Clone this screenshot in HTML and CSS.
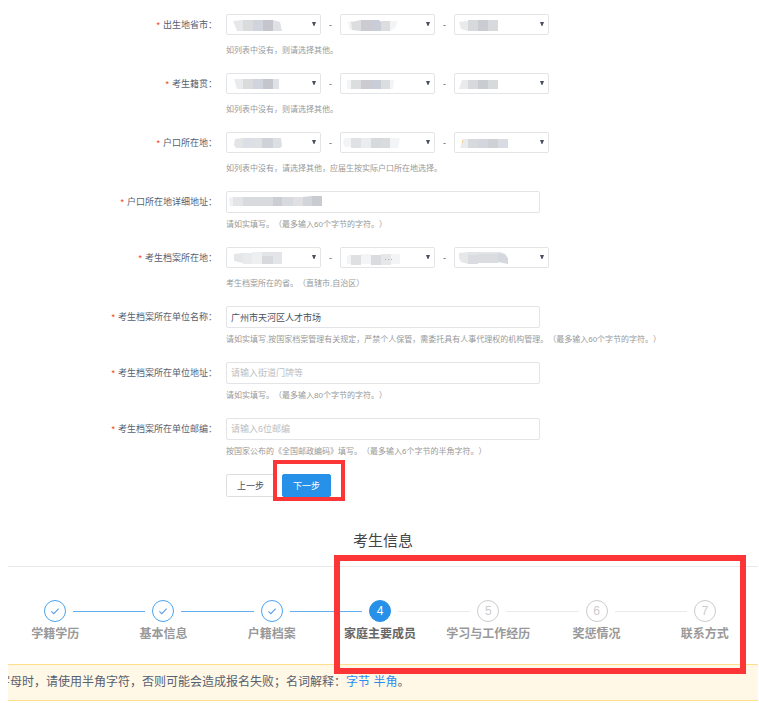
FILE: index.html
```html
<!DOCTYPE html>
<html lang="zh-CN">
<head>
<meta charset="utf-8">
<title>考生信息</title>
<link rel="stylesheet" href="styles.css">
</head>
<body>
<form class="form">
  <div class="row">
    <label class="label" for="birth"><span class="star">*</span>出生地省市：</label>
    <div class="content">
      <div class="selects">
        <div class="pick"><select id="birth"></select><svg class="mask" viewBox="0 0 95 21"><path fill="#e6e7e8" d="M7 7l10-1v11H11z"/><path fill="#dadbdd" d="M17 6h10v11H17z"/><path fill="#d0d4dc" d="M27 6h10v11H27z"/><path fill="#c4c5cd" d="M37 6h10v11H37z"/><path fill="#dfe1e4" d="M47 6l7 2 2 9h-9z"/></svg></div>
        <span class="dash">-</span>
        <div class="pick"><select aria-label="出生地市"></select><svg class="mask" viewBox="0 0 95 21"><path fill="#f3f4f5" d="M8 8l4-1v9l-3-1zM50 7h8l-3 7-5 3z"/><path fill="#dcdddf" d="M11 8l10-2v11l-9-1zM41 7h9v10h-9z"/><path fill="#cccbd1" d="M21 6h11v11H21z"/><path fill="#c8cdd8" d="M32 6h7l2 2v9h-9z"/></svg></div>
        <span class="dash">-</span>
        <div class="pick"><select aria-label="出生地区县"></select><svg class="mask" viewBox="0 0 95 21"><path fill="#e9eaeb" d="M5 8l9-1v10l-7-2z"/><path fill="#d7dadd" d="M14 6h10v11H14zM34 6h10v11H34z"/><path fill="#c9ccd1" d="M24 6h10v11H24z"/></svg></div>
      </div>
      <p class="hint">如列表中没有，则请选择其他。</p>
    </div>
  </div>
  <div class="row">
    <label class="label" for="origin"><span class="star">*</span>考生籍贯：</label>
    <div class="content">
      <div class="selects">
        <div class="pick"><select id="origin"></select><svg class="mask" viewBox="0 0 95 21"><path fill="#eaebec" d="M8 6h9v10h-6z"/><path fill="#dadbdd" d="M17 6h10v10H17z"/><path fill="#d0d4dc" d="M27 6h10v10H27z"/><path fill="#c4c5cd" d="M37 6h10v10H37z"/><path fill="#dfe1e4" d="M47 6h6v10h-6z"/></svg></div>
        <span class="dash">-</span>
        <div class="pick"><select aria-label="籍贯市"></select><svg class="mask" viewBox="0 0 95 21"><path fill="#f3f4f5" d="M7 7h4v9H7zM50 7h4l-1 9h-3z"/><path fill="#dcdddf" d="M11 7h10v9H11zM41 7h9v9h-9z"/><path fill="#cccbd1" d="M21 7h11v9H21z"/><path fill="#c8cdd8" d="M32 7h9v9h-9z"/></svg></div>
        <span class="dash">-</span>
        <div class="pick"><select aria-label="籍贯区县"></select><svg class="mask" viewBox="0 0 95 21"><path fill="#e9eaeb" d="M8 7h6v9H5z"/><path fill="#d7dadd" d="M14 7h10v9H14zM34 7h10v9H34z"/><path fill="#c9ccd1" d="M24 7h10v9H24z"/></svg></div>
      </div>
      <p class="hint">如列表中没有，则请选择其他。</p>
    </div>
  </div>
  <div class="row">
    <label class="label" for="household"><span class="star">*</span>户口所在地：</label>
    <div class="content">
      <div class="selects">
        <div class="pick"><select id="household"></select><svg class="mask" viewBox="0 0 95 21"><path fill="#e3e4e6" d="M9 7l8-1v10H10l-2-3z"/><path fill="#dcdfe5" d="M17 6h10v10H17z"/><path fill="#dfe0e3" d="M27 6h9v10h-9z"/><path fill="#cfd2d8" d="M36 6h11v10H36z"/><path fill="#dde0e3" d="M47 6h8l1 8-2 2h-7z"/></svg></div>
        <span class="dash">-</span>
        <div class="pick"><select aria-label="户口所在市"></select><svg class="mask" viewBox="0 0 95 21"><path fill="#f3f4f5" d="M4 6h7v9H5l-2-3zM50 6h10l-2 10h-8z"/><path fill="#e0e1e4" d="M11 6h10v10H11z"/><path fill="#eaecef" d="M21 6h10v10H21z"/><path fill="#d6dadc" d="M31 6h10v10H31z"/><path fill="#dadbde" d="M41 6h9v10h-9z"/></svg></div>
        <span class="dash">-</span>
        <div class="pick"><select aria-label="户口所在区县"></select><svg class="mask" viewBox="0 0 95 21"><path fill="#eaebec" d="M9 7h5v9H6z"/><path fill="#d7dadd" d="M14 7h10v9H14z"/><path fill="#d3d6dc" d="M24 7h10v9H24z"/><path fill="#d0d1d4" d="M34 7h10v9H34z"/><path fill="#d8dbe1" d="M44 7h10v9H44z"/><path fill="#f3cf95" d="M8 8h1v3H8z"/></svg></div>
      </div>
      <p class="hint">如列表中没有，请选择其他，应届生按实际户口所在地选择。</p>
    </div>
  </div>
  <div class="row">
    <label class="label" for="address"><span class="star">*</span>户口所在地详细地址：</label>
    <div class="content">
      <div class="entry"><input id="address" type="text"><svg class="mask mask-wide" viewBox="0 0 100 22"><path fill="#eff0f1" d="M3 7l4-1v9H4z"/><path fill="#e3e4e7" d="M7 6h10v9H7z"/><path fill="#d8dadd" d="M17 6h30v9H17z"/><path fill="#cdced3" d="M47 6h9v9h-9z"/><path fill="#d7dbdf" d="M56 6h11v9H56z"/><path fill="#e0dfe2" d="M67 6h10v9H67z"/><path fill="#d2d6da" d="M77 6l9-1v10h-9z"/><path fill="#c9cbd1" d="M86 5h10v10H86z"/></svg></div>
      <p class="hint">请如实填写。（最多输入60个字节的字符。）</p>
    </div>
  </div>
  <div class="row">
    <label class="label" for="archive"><span class="star">*</span>考生档案所在地：</label>
    <div class="content">
      <div class="selects">
        <div class="pick"><select id="archive"></select><svg class="mask" viewBox="0 0 95 21"><path fill="#e5e6e7" d="M8 7l9-1v10l-9-2z"/><path fill="#e9eaec" d="M17 6h9v11h-9z"/><path fill="#eeeff0" d="M26 5h10v12H26z"/><path fill="#d8d9dd" d="M36 9h11v8H36z"/><path fill="#e3e5e8" d="M36 5h20v12h-9V9H36z"/></svg></div>
        <span class="dash">-</span>
        <div class="pick"><select aria-label="档案所在市"></select><svg class="mask" viewBox="0 0 95 21"><path fill="#f3f4f5" d="M7 9l4-2v10H7zM21 7h10v10H21zM51 7h9v10h-9z"/><path fill="#dfe0e2" d="M11 8h10v10H11z"/><path fill="#d9dcdf" d="M31 8h10v10H31z"/><path fill="#e5e7e9" d="M41 7h10v11H41z"/><path fill="#aaadb2" d="M45 12h1v1h-1zM48 12h1v1h-1zM51 12h1v1h-1z"/></svg></div>
        <span class="dash">-</span>
        <div class="pick"><select aria-label="档案所在区县"></select><svg class="mask" viewBox="0 0 95 21"><path fill="#e5e7e8" d="M5 6l9-1v12l-7-2-2-4z"/><path fill="#d9dce0" d="M14 8h10v9H14z"/><path fill="#e2e4e5" d="M14 5h32l5 2H24v9h20v-2H24V8H14z"/><path fill="#dadddf" d="M24 7h20v9H24z"/><path fill="#d5d8de" d="M44 6l7 1 3 4v6l-10-2z"/></svg></div>
      </div>
      <p class="hint">考生档案所在的省。（直辖市,自治区）</p>
    </div>
  </div>
  <div class="row">
    <label class="label" for="unit"><span class="star">*</span>考生档案所在单位名称：</label>
    <div class="content">
      <div class="entry"><input id="unit" type="text" value="广州市天河区人才市场"></div>
      <p class="hint">请如实填写,按国家档案管理有关规定，严禁个人保管，需委托具有人事代理权的机构管理。（最多输入60个字节的字符。）</p>
    </div>
  </div>
  <div class="row">
    <label class="label" for="unit-address"><span class="star">*</span>考生档案所在单位地址：</label>
    <div class="content">
      <div class="entry"><input id="unit-address" type="text" placeholder="请输入街道门牌等"></div>
      <p class="hint">请如实填写。（最多输入80个字节的字符。）</p>
    </div>
  </div>
  <div class="row">
    <label class="label" for="postcode"><span class="star">*</span>考生档案所在单位邮编：</label>
    <div class="content">
      <div class="entry"><input id="postcode" type="text" placeholder="请输入6位邮编"></div>
      <p class="hint">按国家公布的《全国邮政编码》填写。（最多输入6个字节的半角字符。）</p>
    </div>
  </div>
  <div class="actions">
    <button class="btn" type="button">上一步</button>
    <div class="next"><button class="btn btn-primary" type="button">下一步</button><span class="frame frame-next"></span></div>
  </div>
</form>

<section>
  <h1 class="title">考生信息</h1>
  <div class="progress">
    <ol class="steps">
      <li class="step done"><div class="track"><span class="dot"><svg viewBox="0 0 22 22"><path d="M7 11.5l2.7 2.5 5.3-5.5"/></svg></span></div>学籍学历</li>
      <li class="step done"><div class="track"><span class="dot"><svg viewBox="0 0 22 22"><path d="M7 11.5l2.7 2.5 5.3-5.5"/></svg></span></div>基本信息</li>
      <li class="step done"><div class="track"><span class="dot"><svg viewBox="0 0 22 22"><path d="M7 11.5l2.7 2.5 5.3-5.5"/></svg></span></div>户籍档案</li>
      <li class="step current"><div class="track"><span class="dot">4</span></div>家庭主要成员</li>
      <li class="step"><div class="track"><span class="dot">5</span></div>学习与工作经历</li>
      <li class="step"><div class="track"><span class="dot">6</span></div>奖惩情况</li>
      <li class="step"><div class="track"><span class="dot">7</span></div>联系方式</li>
    </ol>
    <span class="frame frame-steps"></span>
  </div>
  <div class="notice"><p>字母时，请使用半角字符，否则可能会造成报名失败；名词解释：<a href="#byte">字节</a> <a href="#half">半角</a>。</p></div>
</section>
</body>
</html>
```
FILE: styles.css
```css
* {
  box-sizing: border-box;
}

body {
  margin: 0;
  background: #fff;
  color: #576070;
  font-family: "Liberation Sans", "Noto Sans CJK SC", sans-serif;
  font-size: 9px;
  text-spacing-trim: space-all;
}

.form {
  padding-top: 14px;
}

.row {
  display: grid;
  grid-template-columns: 217px 1fr;
  column-gap: 9px;
  margin-bottom: 16px;
}

.label {
  text-align: right;
  line-height: 22px;
  white-space: nowrap;
}

.star {
  margin-right: 3px;
  color: #ed3f14;
}

.selects {
  display: flex;
  margin-bottom: 9px;
}

.pick,
.entry {
  position: relative;
}

.pick {
  width: 95px;
}

.pick::after {
  content: "";
  position: absolute;
  top: 8px;
  right: 5px;
  width: 4px;
  height: 4px;
  background: #495060;
  clip-path: polygon(0 0, 100% 0, 60% 100%, 40% 100%);
  pointer-events: none;
}

select,
input {
  display: block;
  width: 100%;
  height: 21px;
  margin: 0;
  padding: 0 5px;
  border: 1px solid #e2e4e8;
  border-radius: 2px;
  background: #fff;
  color: #495060;
  font: inherit;
  appearance: none;
}

select {
  margin-bottom: 1px;
}

input {
  height: 22px;
  padding: 0 4px;
}

input::placeholder {
  color: #bbbec4;
}

.entry {
  max-width: 314px;
  margin-bottom: 6px;
}

.mask {
  position: absolute;
  top: 0;
  left: 0;
  width: 95px;
  height: 21px;
  pointer-events: none;
}

.mask-wide {
  width: 100px;
  height: 22px;
}

.dash {
  width: 19px;
  line-height: 22px;
  text-align: center;
}

.hint {
  margin: 0;
  color: #999;
  font-size: 8px;
  line-height: 12px;
}

.actions {
  display: flex;
  gap: 7px;
  padding-left: 226px;
}

.btn {
  width: 49px;
  height: 23px;
  padding: 0;
  border: 1px solid #dddee1;
  border-radius: 2px;
  background: #fff;
  color: #495060;
  font: inherit;
}

.btn-primary {
  display: block;
  border-color: #2790e8;
  background: #2790e8;
  color: #fff;
}

.next,
.progress {
  position: relative;
}

.frame {
  position: absolute;
  border: 6px solid #fc3636;
  pointer-events: none;
}

.frame-next {
  inset: -14px -14px -4px -9px;
  border-width: 4px;
}

.frame-steps {
  inset: -12px 13px -10px 44%;
}

.title {
  margin: 26px 1px 0 8px;
  padding-bottom: 7px;
  border-bottom: 1px solid #e9eaec;
  color: #444;
  font-size: 15px;
  font-weight: 400;
  line-height: 36px;
  text-align: center;
}

.steps {
  display: grid;
  grid-template-columns: repeat(7, 1fr);
  margin: 0;
  padding: 33px 0 21px 1px;
  list-style: none;
}

.step {
  color: #999;
  font-size: 12px;
  font-weight: 700;
  line-height: 18px;
  text-align: center;
}

.track {
  display: flex;
  align-items: center;
  margin-bottom: 3px;
}

.track::before,
.track::after {
  content: "";
  flex: 1;
  height: 1px;
  background: #e9eaec;
}

.done .track::before,
.done .track::after,
.current .track::before {
  background: #63b0f0;
}

.step:first-child .track::before,
.step:last-child .track::after {
  visibility: hidden;
}

.dot {
  width: 22px;
  height: 22px;
  margin: 0 7px;
  border: 1px solid #ccc;
  border-radius: 50%;
  color: #ccc;
  font-weight: 400;
  line-height: 20px;
}

.dot svg {
  display: block;
  width: 20px;
  height: 20px;
  fill: none;
  stroke: #5c9ee8;
  stroke-width: 1.2;
}

.done .dot {
  border-color: #4aa3f0;
}

.current {
  color: #666;
}

.current .dot {
  border-color: #2790e8;
  background: #2790e8;
  color: #fff;
}

.notice {
  overflow: hidden;
  margin: 0 1px 0 8px;
  border: solid #ffdf8c;
  border-width: 1px 0;
  background: #fff8e6;
}

.notice p {
  margin: 0 0 0 -10px;
  font-size: 12px;
  line-height: 35px;
  white-space: nowrap;
}

.notice a {
  color: #2d8cf0;
  text-decoration: none;
}
```
